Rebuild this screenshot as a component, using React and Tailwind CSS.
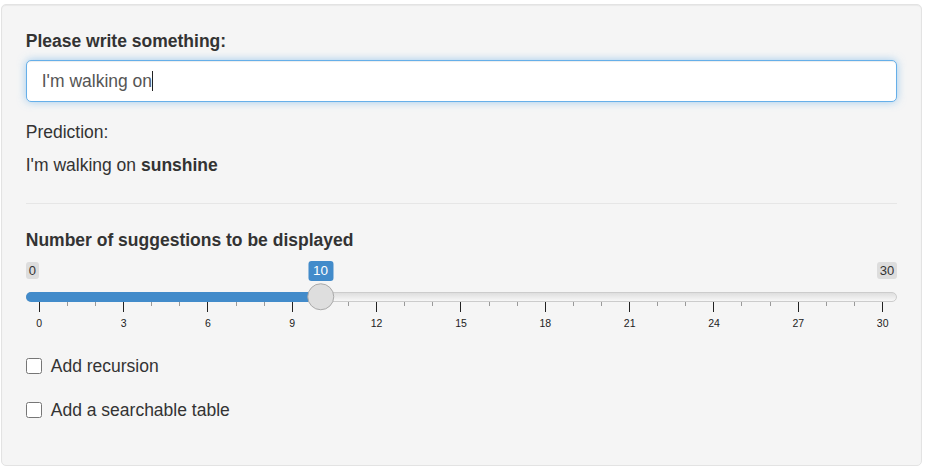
import React from 'react';

// slider scale: 0..30 spread over 844px, starting 13px inside the track
const MAX = 30;
const VALUE = 10;
const pos = (v) => 13 + v * (844 / MAX);

const ticks = Array.from({ length: MAX + 1 }, (_, i) => i);
const majors = ticks.filter((i) => i % 3 === 0);

const Slider = () => {
    return (
        <div className="mt-[8.5px]">
            {/* min / max labels, current value floats over them */}
            <div className="relative flex justify-between items-start h-[20px]">
                <span className="mt-[1px] h-[17px] px-[3px] rounded-[3px] bg-[#dddddd] text-[13px] leading-[17px] text-[#333]">0</span>
                <span
                    className="absolute top-0 h-[20px] px-[5px] rounded-[3px] bg-[#428bca] text-[13.5px] leading-[20px] text-white -translate-x-1/2"
                    style={{ left: pos(VALUE) + 0.5 + 'px' }}
                >
                    {VALUE}
                </span>
                <span className="mt-[1px] h-[17px] px-[3px] rounded-[3px] bg-[#dddddd] text-[13px] leading-[17px] text-[#333]">30</span>
            </div>

            {/* track with fill and handle */}
            <div className="relative mt-[10.5px] h-[10px] rounded-full border border-[#cccccc] bg-gradient-to-b from-[#dedede] to-[#f7f7f7]">
                <div className="absolute -left-px -top-px h-[10px] rounded-l-full bg-[#428bca]" style={{ width: pos(VALUE) + 'px' }} />
                <div
                    className="absolute top-1/2 w-[27.5px] h-[27.5px] rounded-full border border-[#aaaaaa] bg-[#dedede] -translate-x-1/2 -translate-y-1/2"
                    style={{ left: pos(VALUE) - 0.5 + 'px' }}
                />
            </div>

            {/* tick marks */}
            <div className="flex justify-between items-start pl-[13px] pr-[14px] h-[10px]">
                {ticks.map((v) =>
                    v % 3 === 0 ? (
                        <div key={v} className="w-px h-[10px] bg-[#222]" />
                    ) : (
                        <div key={v} className="w-px h-[4.5px] bg-[#999]" />
                    )
                )}
            </div>

            {/* tick labels */}
            <div className="flex justify-between pl-[13.5px] pr-[14.5px] mt-[5px]">
                {majors.map((v) => (
                    <div key={v} className="w-0 flex justify-center">
                        <span className="text-[10.5px] leading-[13px] text-[#222]">{v}</span>
                    </div>
                ))}
            </div>
        </div>
    );
};

const Check = ({ label }) => (
    <label className="flex items-center gap-[9px] h-[25px]">
        <input type="checkbox" className="w-[16px] h-[16px] m-0" />
        <span>{label}</span>
    </label>
);

export default function App() {
    return (
        <div className="w-[925px] h-[471px] bg-white pt-[4px] pl-[1px]" style={{ fontFamily: '"Liberation Sans", Arial, sans-serif' }}>
            <div className="w-[921px] h-[462px] rounded-[5px] border border-[#e3e3e3] bg-[#f5f5f5] shadow-[inset_0_1px_1px_rgba(0,0,0,0.05)] pt-[23.5px] px-[23.75px] text-[17.5px] leading-[25px] text-[#333]">
                <label className="block font-bold mb-[6.25px]">Please write something:</label>
                <div className="h-[42.5px] rounded-[5px] border border-[#66afe9] bg-white px-[15px] flex items-center text-[#555] shadow-[inset_0_1px_1px_rgba(0,0,0,0.075),0_0_8px_rgba(102,175,233,0.6)]">
                    <span>I'm walking on</span>
                    <span className="inline-block w-px h-[20px] bg-[#222]" />
                </div>

                <div className="mt-[18px]">Prediction:</div>
                <div className="mt-[8px]">
                    I'm walking on <b>sunshine</b>
                </div>

                <hr className="mt-[24.5px] border-0 border-t border-[#e6e6e6]" />

                <label className="block font-bold mt-[24px]">Number of suggestions to be displayed</label>
                <Slider />

                <div className="flex flex-col gap-[19px] mt-[24px]">
                    <Check label="Add recursion" />
                    <Check label="Add a searchable table" />
                </div>
            </div>
        </div>
    );
}
